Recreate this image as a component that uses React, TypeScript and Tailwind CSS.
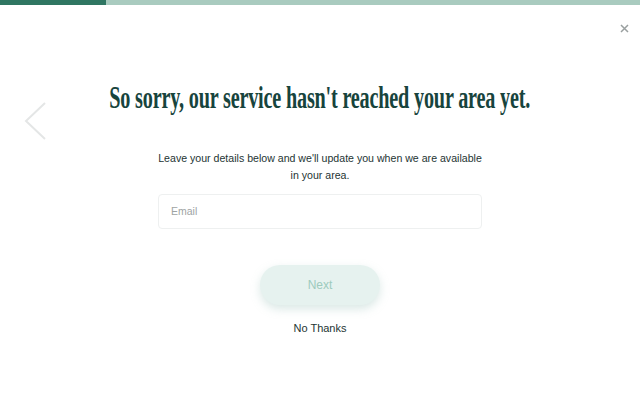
export default function App() {
  return (
    <div className="relative w-[640px] h-[416px] bg-white overflow-hidden font-['Liberation_Sans',Arial,sans-serif]">
      <div className="flex h-[5px]">
        <div className="w-[106px] bg-[#2f7662]" />
        <div className="flex-1 bg-[#a9cbbf]" />
      </div>

      <button className="absolute right-[11px] top-[24px] text-[#9aa0a0]">
        <svg width="9" height="9" viewBox="0 0 9 9" fill="none" stroke="currentColor" strokeWidth="1.5">
          <path d="M1 1l7 7M8 1l-7 7" />
        </svg>
      </button>

      <button className="absolute left-[24px] top-[102px] text-[#e4e6e6]">
        <svg width="22" height="38" viewBox="0 0 22 38" fill="none" stroke="currentColor" strokeWidth="2">
          <path d="M21 1L2 19l19 18" />
        </svg>
      </button>

      <div className="flex flex-col items-center pt-[73px]">
        <h1 className="font-['Liberation_Serif',serif] font-bold text-[31px] leading-[40px] text-[#17443d] tracking-[-0.3px] scale-x-[0.652] whitespace-nowrap">
          So sorry, our service hasn't reached your area yet.
        </h1>
        <p className="mt-[32px] w-[334px] text-center text-[10.6px] leading-[17px] text-[#243433]">
          Leave your details below and we'll update you when we are available in your area.
        </p>
        <div className="mt-[10px] w-[324px] h-[35px] border border-[#eef0f0] rounded-[4px] flex items-center px-[12px] text-[10.5px] text-[#9ea3a3]">
          Email
        </div>
        <button className="mt-[36px] w-[120px] h-[40px] rounded-full bg-[#e6f2ef] text-[#9dcbbd] text-[12px] shadow-[0_4px_10px_rgba(150,190,180,0.35)]">
          Next
        </button>
        <button className="mt-[15px] text-[11px] text-[#243433]">No Thanks</button>
      </div>
    </div>
  )
}
